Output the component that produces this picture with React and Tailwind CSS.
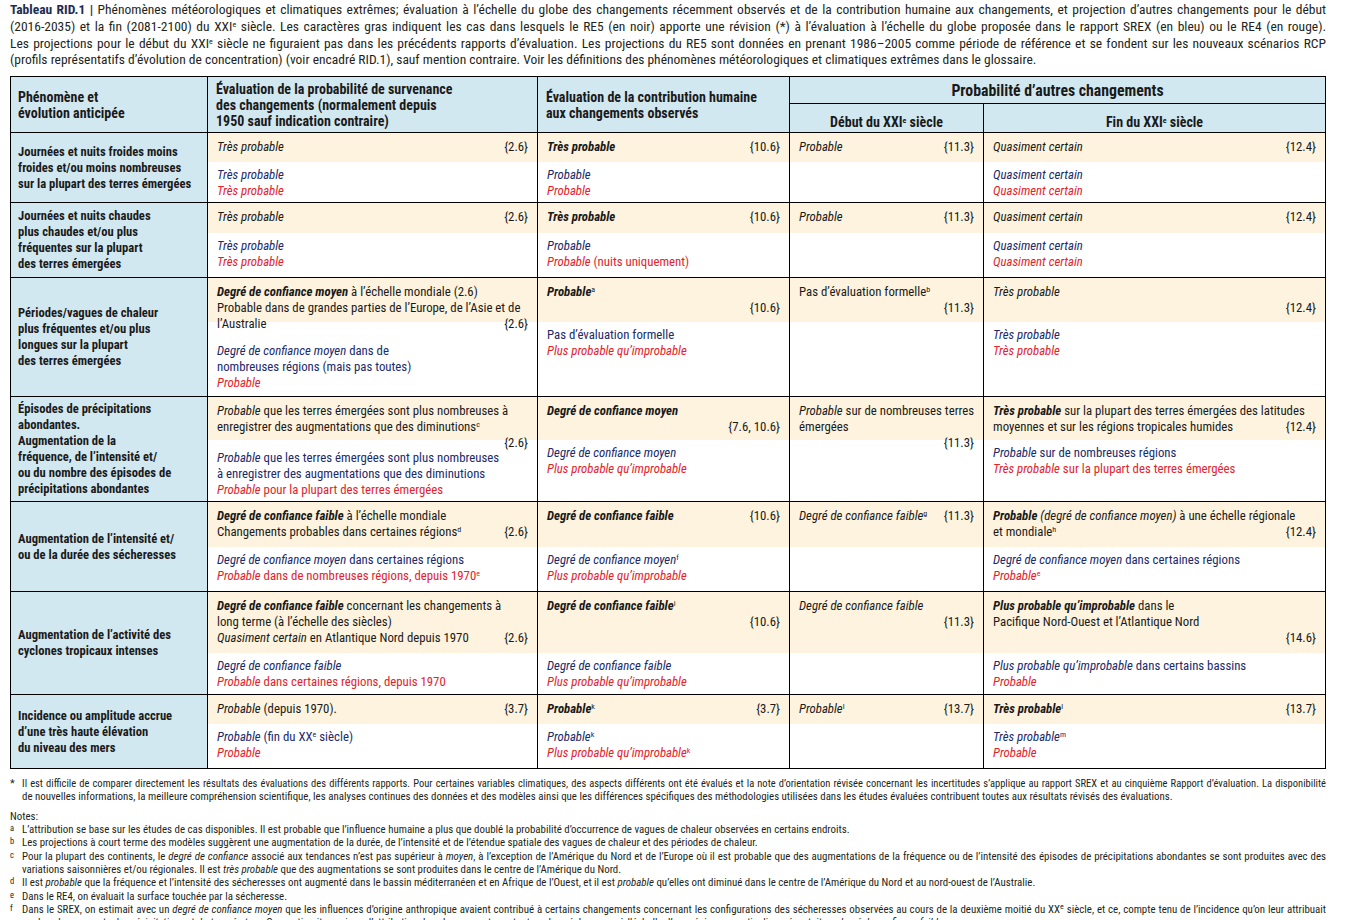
const BLUE = "text-[#202a6a]";
const RED = "text-[#e3232c]";

function Ln({ children, r, className = "" }) {
  return (
    <div className={`flex h-4 items-baseline justify-between whitespace-nowrap leading-4 ${className}`}>
      <span>{children}</span>
      {r && <span>{r}</span>}
    </div>
  );
}

function Rt({ children }) {
  return <div className="h-4 whitespace-nowrap text-right leading-4">{children}</div>;
}

const It = ({ children }) => <i>{children}</i>;
const Bi = ({ children }) => (
  <b className="font-bold">
    <i>{children}</i>
  </b>
);
const Sup = ({ children }) => <sup className="text-[8px]">{children}</sup>;

const rows = [
  {
    h: "h-[70px]",
    yh: "h-[29px]",
    head: ["Journées et nuits froides moins", "froides et/ou moins nombreuses", "sur la plupart des terres émergées"],
    cells: [
      {
        top: <Ln r="{2.6}"><It>Très probable</It></Ln>,
        bot: (
          <>
            <Ln className={BLUE}><It>Très probable</It></Ln>
            <Ln className={RED}><It>Très probable</It></Ln>
          </>
        ),
      },
      {
        top: <Ln r="{10.6}"><Bi>Très probable</Bi></Ln>,
        bot: (
          <>
            <Ln className={BLUE}><It>Probable</It></Ln>
            <Ln className={RED}><It>Probable</It></Ln>
          </>
        ),
      },
      { top: <Ln r="{11.3}"><It>Probable</It></Ln> },
      {
        top: <Ln r="{12.4}"><It>Quasiment certain</It></Ln>,
        bot: (
          <>
            <Ln className={BLUE}><It>Quasiment certain</It></Ln>
            <Ln className={RED}><It>Quasiment certain</It></Ln>
          </>
        ),
      },
    ],
  },
  {
    h: "h-[75px]",
    yh: "h-[30px]",
    head: ["Journées et nuits chaudes", "plus chaudes et/ou plus", "fréquentes sur la plupart", "des terres émergées"],
    cells: [
      {
        top: <Ln r="{2.6}"><It>Très probable</It></Ln>,
        bot: (
          <>
            <Ln className={BLUE}><It>Très probable</It></Ln>
            <Ln className={RED}><It>Très probable</It></Ln>
          </>
        ),
      },
      {
        top: <Ln r="{10.6}"><Bi>Très probable</Bi></Ln>,
        bot: (
          <>
            <Ln className={BLUE}><It>Probable</It></Ln>
            <Ln className={RED}><It>Probable</It> (nuits uniquement)</Ln>
          </>
        ),
      },
      { top: <Ln r="{11.3}"><It>Probable</It></Ln> },
      {
        top: <Ln r="{12.4}"><It>Quasiment certain</It></Ln>,
        bot: (
          <>
            <Ln className={BLUE}><It>Quasiment certain</It></Ln>
            <Ln className={RED}><It>Quasiment certain</It></Ln>
          </>
        ),
      },
    ],
  },
  {
    h: "h-[119px]",
    yh: "h-[44px]",
    head: ["Périodes/vagues de chaleur", "plus fréquentes et/ou plus", "longues sur la plupart", "des terres émergées"],
    cells: [
      {
        top: (
          <>
            <Ln><Bi>Degré de confiance moyen</Bi> à l’échelle mondiale (2.6)</Ln>
            <Ln>Probable dans de grandes parties de l’Europe, de l’Asie et de</Ln>
            <Ln r="{2.6}">l’Australie</Ln>
          </>
        ),
        bpt: "pt-[21px]",
        bot: (
          <>
            <Ln className={BLUE}><It>Degré de confiance moyen</It> dans de</Ln>
            <Ln className={BLUE}>nombreuses régions (mais pas toutes)</Ln>
            <Ln className={RED}><It>Probable</It></Ln>
          </>
        ),
      },
      {
        top: (
          <>
            <Ln><Bi>Probable</Bi><Sup>a</Sup></Ln>
            <Rt>{"{10.6}"}</Rt>
          </>
        ),
        bot: (
          <>
            <Ln className={BLUE}>Pas d’évaluation formelle</Ln>
            <Ln className={RED}><It>Plus probable qu’improbable</It></Ln>
          </>
        ),
      },
      {
        top: (
          <>
            <Ln>Pas d’évaluation formelle<Sup>b</Sup></Ln>
            <Rt>{"{11.3}"}</Rt>
          </>
        ),
      },
      {
        top: (
          <>
            <Ln><It>Très probable</It></Ln>
            <Rt>{"{12.4}"}</Rt>
          </>
        ),
        bot: (
          <>
            <Ln className={BLUE}><It>Très probable</It></Ln>
            <Ln className={RED}><It>Très probable</It></Ln>
          </>
        ),
      },
    ],
  },
  {
    h: "h-[105px]",
    yh: "h-[43px]",
    head: [
      "Épisodes de précipitations",
      "abondantes.",
      "Augmentation de la",
      "fréquence, de l’intensité et/",
      "ou du nombre des épisodes de",
      "précipitations abondantes",
    ],
    cells: [
      {
        top: (
          <>
            <Ln><It>Probable</It> que les terres émergées sont plus nombreuses à</Ln>
            <Ln>enregistrer des augmentations que des diminutions<Sup>c</Sup></Ln>
            <Rt>{"{2.6}"}</Rt>
          </>
        ),
        bpt: "pt-[10px]",
        bot: (
          <>
            <Ln className={BLUE}><It>Probable</It> que les terres émergées sont plus nombreuses</Ln>
            <Ln className={BLUE}>à enregistrer des augmentations que des diminutions</Ln>
            <Ln className={RED}><It>Probable</It> pour la plupart des terres émergées</Ln>
          </>
        ),
      },
      {
        top: (
          <>
            <Ln><Bi>Degré de confiance moyen</Bi></Ln>
            <Rt>{"{7.6, 10.6}"}</Rt>
          </>
        ),
        bot: (
          <>
            <Ln className={BLUE}><It>Degré de confiance moyen</It></Ln>
            <Ln className={RED}><It>Plus probable qu’improbable</It></Ln>
          </>
        ),
      },
      {
        top: (
          <>
            <Ln><It>Probable</It> sur de nombreuses terres</Ln>
            <Ln>émergées</Ln>
            <Rt>{"{11.3}"}</Rt>
          </>
        ),
      },
      {
        top: (
          <>
            <Ln><Bi>Très probable</Bi> sur la plupart des terres émergées des latitudes</Ln>
            <Ln r="{12.4}">moyennes et sur les régions tropicales humides</Ln>
          </>
        ),
        bot: (
          <>
            <Ln className={BLUE}><It>Probable</It> sur de nombreuses régions</Ln>
            <Ln className={RED}><It>Très probable</It> sur la plupart des terres émergées</Ln>
          </>
        ),
      },
    ],
  },
  {
    h: "h-[90px]",
    yh: "h-[45px]",
    head: ["Augmentation de l’intensité et/", "ou de la durée des sécheresses"],
    cells: [
      {
        top: (
          <>
            <Ln><Bi>Degré de confiance faible</Bi> à l’échelle mondiale</Ln>
            <Ln r="{2.6}">Changements probables dans certaines régions<Sup>d</Sup></Ln>
          </>
        ),
        bot: (
          <>
            <Ln className={BLUE}><It>Degré de confiance moyen</It> dans certaines régions</Ln>
            <Ln className={RED}><It>Probable</It> dans de nombreuses régions, depuis 1970<Sup>e</Sup></Ln>
          </>
        ),
      },
      {
        top: <Ln r="{10.6}"><Bi>Degré de confiance faible</Bi></Ln>,
        bot: (
          <>
            <Ln className={BLUE}><It>Degré de confiance moyen</It><Sup>f</Sup></Ln>
            <Ln className={RED}><It>Plus probable qu’improbable</It></Ln>
          </>
        ),
      },
      { top: <Ln r="{11.3}"><It>Degré de confiance faible</It><Sup>g</Sup></Ln> },
      {
        top: (
          <>
            <Ln><Bi>Probable</Bi> <It>(degré de confiance moyen)</It> à une échelle régionale</Ln>
            <Ln r="{12.4}">et mondiale<Sup>h</Sup></Ln>
          </>
        ),
        bot: (
          <>
            <Ln className={BLUE}><It>Degré de confiance moyen</It> dans certaines régions</Ln>
            <Ln className={RED}><It>Probable</It><Sup>e</Sup></Ln>
          </>
        ),
      },
    ],
  },
  {
    h: "h-[103px]",
    yh: "h-[61px]",
    head: ["Augmentation de l’activité des", "cyclones tropicaux intenses"],
    cells: [
      {
        top: (
          <>
            <Ln><Bi>Degré de confiance faible</Bi> concernant les changements à</Ln>
            <Ln>long terme (à l’échelle des siècles)</Ln>
            <Ln r="{2.6}"><It>Quasiment certain</It> en Atlantique Nord depuis 1970</Ln>
          </>
        ),
        bot: (
          <>
            <Ln className={BLUE}><It>Degré de confiance faible</It></Ln>
            <Ln className={RED}><It>Probable</It> dans certaines régions, depuis 1970</Ln>
          </>
        ),
      },
      {
        top: (
          <>
            <Ln><Bi>Degré de confiance faible</Bi><Sup>i</Sup></Ln>
            <Rt>{"{10.6}"}</Rt>
          </>
        ),
        bot: (
          <>
            <Ln className={BLUE}><It>Degré de confiance faible</It></Ln>
            <Ln className={RED}><It>Plus probable qu’improbable</It></Ln>
          </>
        ),
      },
      {
        top: (
          <>
            <Ln><It>Degré de confiance faible</It></Ln>
            <Rt>{"{11.3}"}</Rt>
          </>
        ),
      },
      {
        top: (
          <>
            <Ln><Bi>Plus probable qu’improbable</Bi> dans le</Ln>
            <Ln>Pacifique Nord-Ouest et l’Atlantique Nord</Ln>
            <Rt>{"{14.6}"}</Rt>
          </>
        ),
        bot: (
          <>
            <Ln className={BLUE}><It>Plus probable qu’improbable</It> dans certains bassins</Ln>
            <Ln className={RED}><It>Probable</It></Ln>
          </>
        ),
      },
    ],
  },
  {
    h: "h-[74px]",
    yh: "h-[29px]",
    head: ["Incidence ou amplitude accrue", "d’une très haute élévation", "du niveau des mers"],
    cells: [
      {
        top: <Ln r="{3.7}"><It>Probable</It> (depuis 1970).</Ln>,
        bot: (
          <>
            <Ln className={BLUE}><It>Probable</It> (fin du XX<Sup>e</Sup> siècle)</Ln>
            <Ln className={RED}><It>Probable</It></Ln>
          </>
        ),
      },
      {
        top: <Ln r="{3.7}"><Bi>Probable</Bi><Sup>k</Sup></Ln>,
        bot: (
          <>
            <Ln className={BLUE}><It>Probable</It><Sup>k</Sup></Ln>
            <Ln className={RED}><It>Plus probable qu’improbable</It><Sup>k</Sup></Ln>
          </>
        ),
      },
      { top: <Ln r="{13.7}"><It>Probable</It><Sup>l</Sup></Ln> },
      {
        top: <Ln r="{13.7}"><Bi>Très probable</Bi><Sup>l</Sup></Ln>,
        bot: (
          <>
            <Ln className={BLUE}><It>Très probable</It><Sup>m</Sup></Ln>
            <Ln className={RED}><It>Probable</It></Ln>
          </>
        ),
      },
    ],
  },
];

const colW = ["w-[330px]", "w-[252px]", "w-[194px]", "flex-1"];

function Row({ row }) {
  return (
    <div className={`flex border-t border-black ${row.h}`}>
      <div className="flex w-[196px] shrink-0 items-center bg-[#d2e8f1] pl-[7px] text-[12.6px] font-bold leading-4">
        <div>
          {row.head.map((t) => (
            <div key={t} className="whitespace-nowrap">{t}</div>
          ))}
        </div>
      </div>
      {row.cells.map((c, i) => (
        <div key={i} className={`flex shrink-0 flex-col border-l border-black ${colW[i]}`}>
          <div className={`shrink-0 bg-[#fef3de] px-[9px] pt-[6px] ${row.yh}`}>{c.top}</div>
          <div className={`px-[9px] ${c.bpt || "pt-[5px]"}`}>{c.bot}</div>
        </div>
      ))}
    </div>
  );
}

function Title() {
  const j = "[text-align-last:justify] text-justify whitespace-nowrap";
  return (
    <div className="pt-[1px] text-[13.5px] leading-[16.8px] text-[#231f20]">
      <div className={j}>
        <b className="font-bold text-[#1e2d4f]">Tableau RID.1 |</b> Phénomènes météorologiques et climatiques extrêmes; évaluation à l’échelle du globe des changements récemment observés et de la contribution humaine aux changements, et projection d’autres changements pour le début
      </div>
      <div className={j}>
        (2016-2035) et la fin (2081-2100) du XXI<Sup>e</Sup> siècle. Les caractères gras indiquent les cas dans lesquels le RE5 (en noir) apporte une révision (*) à l’évaluation à l’échelle du globe proposée dans le rapport SREX (en bleu) ou le RE4 (en rouge).
      </div>
      <div className={j}>
        Les projections pour le début du XXI<Sup>e</Sup> siècle ne figuraient pas dans les précédents rapports d’évaluation. Les projections du RE5 sont données en prenant 1986–2005 comme période de référence et se fondent sur les nouveaux scénarios RCP
      </div>
      <div className="whitespace-nowrap">
        (profils représentatifs d’évolution de concentration) (voir encadré RID.1), sauf mention contraire. Voir les définitions des phénomènes météorologiques et climatiques extrêmes dans le glossaire.
      </div>
    </div>
  );
}

function Note({ m, children }) {
  return (
    <div className="flex">
      <span className="w-[12px] shrink-0 text-[8.5px] leading-[10px]">{m}</span>
      <div className="flex-1">{children}</div>
    </div>
  );
}

function Notes() {
  const j = "[text-align-last:justify] text-justify whitespace-nowrap";
  return (
    <div className="mt-[8px] text-[10.9px] leading-[13.3px] text-[#231f20]">
      <div className="flex">
        <span className="w-[12px] shrink-0">*</span>
        <div className="flex-1">
          <div className={`${j} text-[10.5px]`}>
            Il est difficile de comparer directement les résultats des évaluations des différents rapports. Pour certaines variables climatiques, des aspects différents ont été évalués et la note d’orientation révisée concernant les incertitudes s’applique au rapport SREX et au cinquième Rapport d’évaluation. La disponibilité
          </div>
          <div className="whitespace-nowrap">
            de nouvelles informations, la meilleure compréhension scientifique, les analyses continues des données et des modèles ainsi que les différences spécifiques des méthodologies utilisées dans les études évaluées contribuent toutes aux résultats révisés des évaluations.
          </div>
        </div>
      </div>
      <div className="mt-[6px]">Notes:</div>
      <Note m="a">
        <div className="whitespace-nowrap">L’attribution se base sur les études de cas disponibles. Il est probable que l’influence humaine a plus que doublé la probabilité d’occurrence de vagues de chaleur observées en certains endroits.</div>
      </Note>
      <Note m="b">
        <div className="whitespace-nowrap">Les projections à court terme des modèles suggèrent une augmentation de la durée, de l’intensité et de l’étendue spatiale des vagues de chaleur et des périodes de chaleur.</div>
      </Note>
      <Note m="c">
        <div className={j}>
          Pour la plupart des continents, le <i>degré de confiance</i> associé aux tendances n’est pas supérieur à <i>moyen</i>, à l’exception de l’Amérique du Nord et de l’Europe où il est probable que des augmentations de la fréquence ou de l’intensité des épisodes de précipitations abondantes se sont produites avec des
        </div>
        <div className="whitespace-nowrap">
          variations saisonnières et/ou régionales. Il est <i>très probable</i> que des augmentations se sont produites dans le centre de l’Amérique du Nord.
        </div>
      </Note>
      <Note m="d">
        <div className="whitespace-nowrap">
          Il est <i>probable</i> que la fréquence et l’intensité des sécheresses ont augmenté dans le bassin méditerranéen et en Afrique de l’Ouest, et il est <i>probable</i> qu’elles ont diminué dans le centre de l’Amérique du Nord et au nord-ouest de l’Australie.
        </div>
      </Note>
      <Note m="e">
        <div className="whitespace-nowrap">Dans le RE4, on évaluait la surface touchée par la sécheresse.</div>
      </Note>
      <Note m="f">
        <div className={j}>
          Dans le SREX, on estimait avec un <i>degré de confiance moyen</i> que les influences d’origine anthropique avaient contribué à certains changements concernant les configurations des sécheresses observées au cours de la deuxième moitié du XX<Sup>e</Sup> siècle, et ce, compte tenu de l’incidence qu’on leur attribuait
        </div>
        <div className="whitespace-nowrap">
          sur les changements de <i>précipitations</i> et de <i>température</i>. On y estimait aussi que l’attribution des changements portant sur les sécheresses à l’échelle d’une région en particulier présentait un <i>degré de confiance faible</i>.
        </div>
      </Note>
    </div>
  );
}

export default function App() {
  return (
    <div className="h-[920px] w-[1346px] overflow-hidden bg-white font-['Roboto_Condensed','Liberation_Sans_Narrow',sans-serif] text-[#1a1a1a]">
      <div className="pl-[10px] pr-[20px]">
        <Title />
        <div className="mt-[8px] border border-black text-[12.8px]">
          <div className="flex h-[55px] text-[14px] font-bold leading-4">
            <div className="flex w-[196px] shrink-0 items-center bg-[#d2e8f1] pl-[7px]">
              <div>
                <div>Phénomène et</div>
                <div>évolution anticipée</div>
              </div>
            </div>
            <div className="flex w-[330px] shrink-0 items-center border-l border-black bg-[#d2e8f1] px-[8px]">
              <div>
                <div>Évaluation de la probabilité de survenance</div>
                <div>des changements (normalement depuis</div>
                <div>1950 sauf indication contraire)</div>
              </div>
            </div>
            <div className="flex w-[252px] shrink-0 items-center border-l border-black bg-[#d2e8f1] px-[8px]">
              <div>
                <div>Évaluation de la contribution humaine</div>
                <div>aux changements observés</div>
              </div>
            </div>
            <div className="flex flex-1 flex-col border-l border-black bg-[#d2e8f1]">
              <div className="flex h-[26px] items-center justify-center pt-[2px] text-[15.8px]">Probabilité d’autres changements</div>
              <div className="flex flex-1 border-t border-black">
                <div className="w-[193px] pt-[10px] text-center">
                  Début du XXI<Sup>e</Sup> siècle
                </div>
                <div className="flex-1 border-l border-black pt-[10px] text-center">
                  Fin du XXI<Sup>e</Sup> siècle
                </div>
              </div>
            </div>
          </div>
          {rows.map((r, i) => (
            <Row key={i} row={r} />
          ))}
        </div>
        <Notes />
      </div>
    </div>
  );
}
